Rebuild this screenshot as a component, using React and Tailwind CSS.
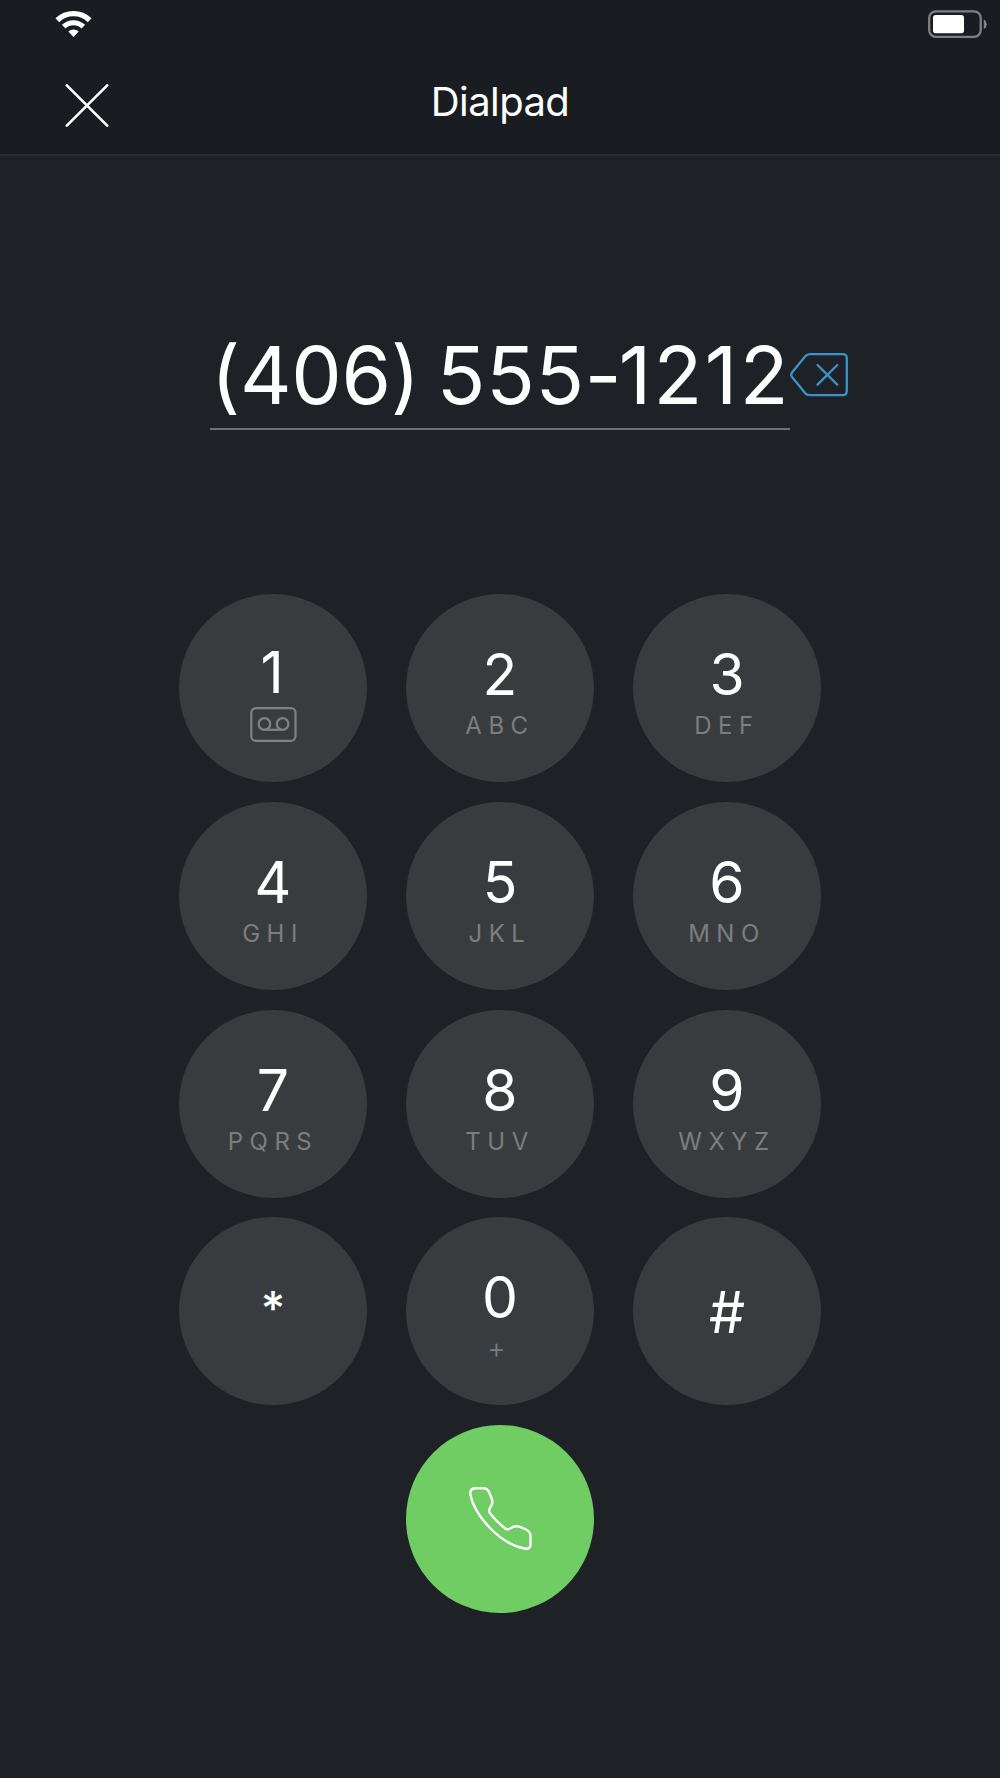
const keys = [
  { digit: "1", voicemail: true },
  { digit: "2", letters: "ABC" },
  { digit: "3", letters: "DEF" },
  { digit: "4", letters: "GHI" },
  { digit: "5", letters: "JKL" },
  { digit: "6", letters: "MNO" },
  { digit: "7", letters: "PQRS" },
  { digit: "8", letters: "TUV" },
  { digit: "9", letters: "WXYZ" },
  { digit: "*" },
  { digit: "0", letters: "+" },
  { digit: "#" },
];

function WifiIcon() {
  return (
    <svg className="h-[27px] w-[37px]" viewBox="0 0 37 27" fill="none" stroke="#fff">
      <path d="M2.3 10.2A23.2 23.2 0 0 1 34.7 10.2" strokeWidth="5.4" />
      <path d="M8.7 16.7A14.1 14.1 0 0 1 28.3 16.7" strokeWidth="5.2" />
      <path d="M18.5 27L13.3 21.6A7.6 7.6 0 0 1 23.7 21.6Z" fill="#fff" stroke="none" />
    </svg>
  );
}

function BatteryIcon() {
  return (
    <svg className="h-7 w-[59px]" viewBox="0 0 59 28" fill="none">
      <rect x="1.2" y="1.4" width="51.5" height="25.4" rx="6.5" stroke="#7e8083" strokeWidth="2.3" />
      <rect x="5" y="5" width="31" height="18.2" rx="2.8" fill="#fff" />
      <path d="M55.8 9.2Q58.8 11 58.8 14.2Q58.8 17.4 55.8 19.2Z" fill="#85878a" />
    </svg>
  );
}

function CloseIcon() {
  return (
    <svg
      className="h-11 w-11"
      viewBox="0 0 44 44"
      fill="none"
      stroke="#fff"
      strokeWidth="2.6"
      strokeLinecap="round"
    >
      <path d="M1.8 1.3L42.2 41.7M42.2 1.3L1.8 41.7" />
    </svg>
  );
}

function BackspaceIcon() {
  return (
    <svg
      className="h-11 w-[58px]"
      viewBox="0 0 58 44"
      fill="none"
      stroke="#3d93c7"
      strokeWidth="2.3"
      strokeLinecap="round"
      strokeLinejoin="round"
    >
      <path d="M19.5 1.2H52.5Q56.8 1.2 56.8 5.5V37.7Q56.8 42.2 52.5 42.2H19.5Q17 42.2 15.3 40.2L1.8 23.8Q.6 21.8 1.8 19.8L15.3 3.3Q17 1.2 19.5 1.2Z" />
      <path d="M27.5 12L47.3 31.6M47.3 12L27.5 31.6" />
    </svg>
  );
}

function VoicemailIcon() {
  return (
    <svg className="h-[35px] w-[47px]" viewBox="0 0 47 35" fill="none" stroke="#7f8283" strokeWidth="2.2">
      <rect x="1.3" y="1.2" width="44.2" height="32.6" rx="4.5" />
      <circle cx="14.4" cy="17" r="5.8" />
      <circle cx="32.6" cy="17" r="5.8" />
      <path d="M14.4 22.8H32.6" />
    </svg>
  );
}

function PhoneIcon() {
  return (
    <svg
      className="h-[63px] w-[63px]"
      viewBox="0 0 63 63"
      fill="none"
      stroke="#fff"
      strokeWidth="2.4"
      strokeLinejoin="round"
    >
      <path d="M6 1.3H14Q18.5 1.3 20.3 5.5L22.9 12Q24 15.2 22.6 18L20.7 21.5Q19.3 24.3 21.3 26.7Q28 35 36.3 41.5Q38.2 43 40.5 41.8L43.5 40.2Q47.3 38.5 51 39.8L57 42.5Q61.5 44.7 61.5 49V57.5Q61.5 62 56.5 61.8C30 57 5.5 28 1.3 7.5Q.8 1.8 6 1.3Z" />
    </svg>
  );
}

function Key({ digit, letters, voicemail }) {
  return (
    <button className="flex h-[188px] w-[188px] flex-col items-center rounded-full bg-[#393c3e]">
      {voicemail ? (
        <>
          <span className="mt-[44px] mr-[2px] text-[57px] leading-[69px]">{digit}</span>
          <VoicemailIcon />
        </>
      ) : letters === "+" ? (
        <>
          <span className="mt-[46px] text-[57px] leading-[69px]">{digit}</span>
          <span className="mr-[7px] text-[28px] leading-[32px] font-light text-[#7b7e80]">{letters}</span>
        </>
      ) : letters ? (
        <>
          <span className="mt-[46px] text-[57px] leading-[69px]">{digit}</span>
          <span className="text-[24px] leading-[33px] tracking-[6.5px] text-[#7b7e80]">{letters}</span>
        </>
      ) : digit === "*" ? (
        <span className="mt-[56px] text-[47px] leading-[69px] font-medium">{digit}</span>
      ) : (
        <span className="mt-[61px] text-[57px] leading-[69px]">{digit}</span>
      )}
    </button>
  );
}

export default function App() {
  return (
    <div className="flex h-[1778px] w-[1000px] flex-col overflow-hidden bg-[#1e2125] font-['Inter',sans-serif] text-white">
      <header className="h-[156px] border-b-2 border-[#2a2c30] bg-[#191c20]">
        <div className="flex justify-between pt-[10px] pr-[13px] pl-[55px]">
          <WifiIcon />
          <BatteryIcon />
        </div>
        <div className="mt-[42px] grid grid-cols-[1fr_auto_1fr] items-start pl-[65px]">
          <button className="mt-[4px] w-11">
            <CloseIcon />
          </button>
          <h1 className="-ml-[65px] text-[40px] leading-[44px] tracking-[-0.6px]">Dialpad</h1>
        </div>
      </header>

      <main className="flex flex-col items-center">
        <div className="mt-[176px] flex w-full pl-[210px]">
          {/* calt would lift the brackets and hyphen to digit height */}
          <div className="h-[98px] w-[580px] border-b-2 border-[#727175] pl-[1px] text-[80px] leading-[86px] whitespace-nowrap [font-feature-settings:'calt'_0]">
            <span className="tracking-[-0.3px] [word-spacing:-5px]">(406) </span>
            <span className="tracking-[0.7px]">555</span>
            <span className="tracking-[-3px]">-</span>
            <span className="tracking-[2.4px]">1212</span>
          </div>
          <button className="mt-[21px] h-11">
            <BackspaceIcon />
          </button>
        </div>

        <div className="mt-[164.2px] grid grid-cols-3 gap-x-[39px] gap-y-[19.7px]">
          {keys.map((key) => (
            <Key key={key.digit} {...key} />
          ))}
        </div>

        <button className="mt-[19.7px] flex h-[188px] w-[188px] items-center justify-center rounded-full bg-[#6fcd63]">
          <PhoneIcon />
        </button>
      </main>
    </div>
  );
}
